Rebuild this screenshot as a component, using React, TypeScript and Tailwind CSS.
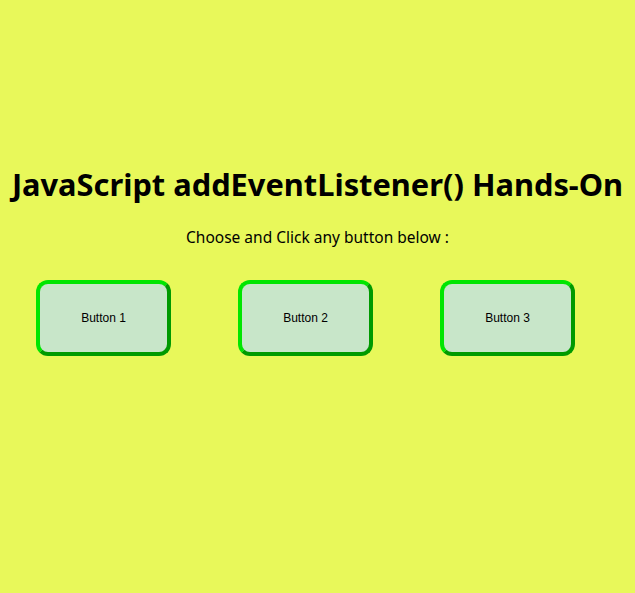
export default function App() {
  const buttons = ["Button 1", "Button 2", "Button 3"];
  return (
    <div className="min-h-[593px] bg-[#e8f85a] font-['Noto_Sans',sans-serif] text-black">
      <div className="pt-[163px] text-center">
        <h1 className="text-[30.8px] font-bold leading-[42px]">
          JavaScript addEventListener() Hands-On
        </h1>
        <p className="mt-[22px] text-[15.5px] leading-[20px]">
          Choose and Click any button below :
        </p>
      </div>
      <div className="mt-[33px] flex gap-[67px] pl-[36px]">
        {buttons.map((b) => (
          <button
            key={b}
            className="h-[76px] w-[135px] rounded-[12px] border-4 border-t-[#00e600] border-l-[#00e600] border-r-[#009a00] border-b-[#009a00] bg-[#c8e6c9] font-['Liberation_Sans',sans-serif] text-[12px]"
          >
            {b}
          </button>
        ))}
      </div>
    </div>
  );
}
